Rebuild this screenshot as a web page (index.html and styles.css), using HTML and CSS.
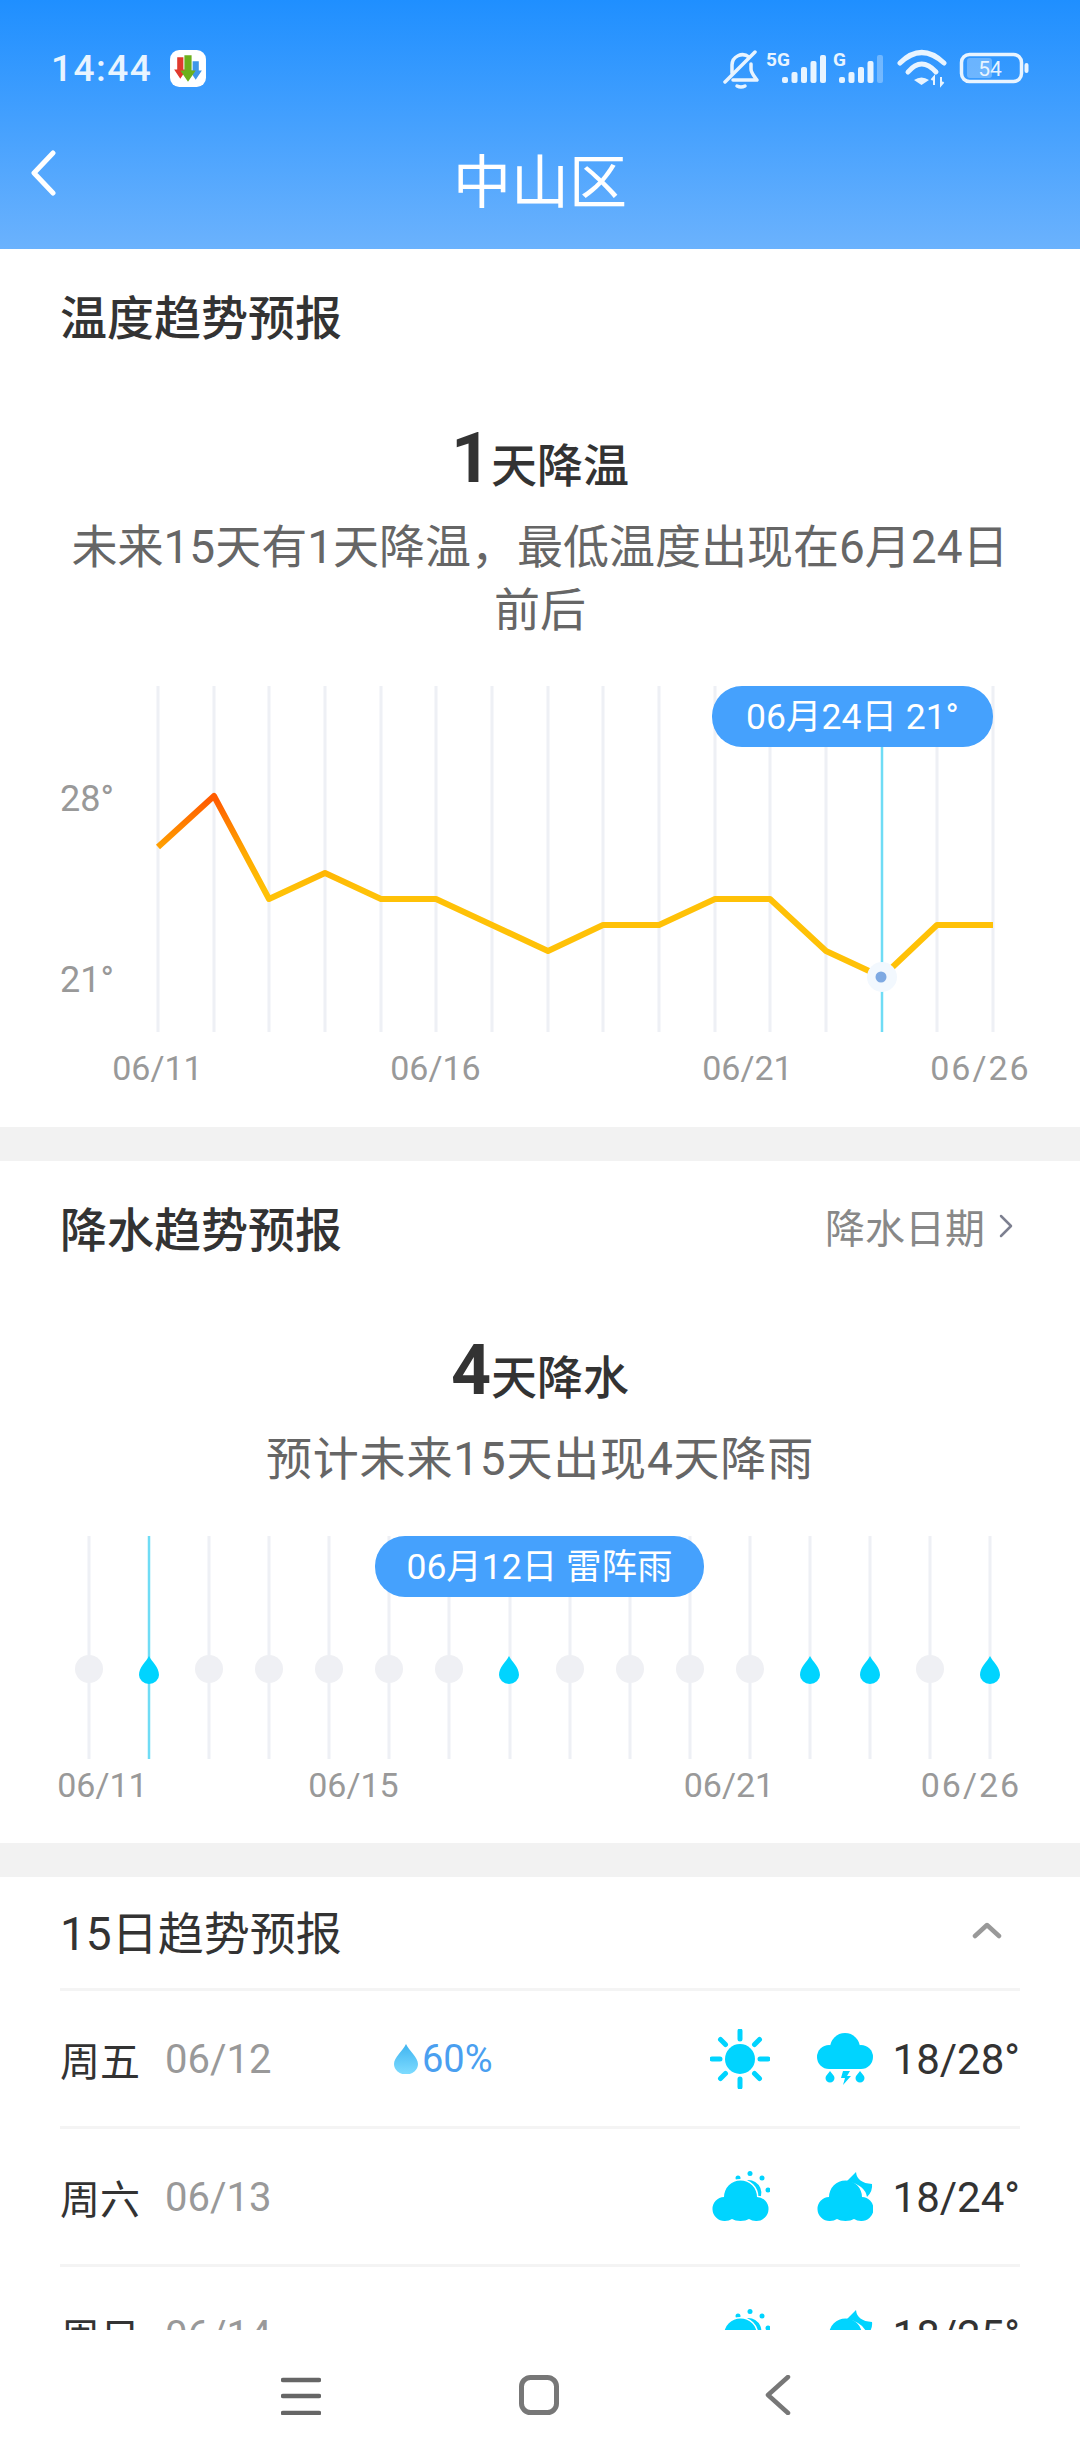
FILE: index.html
```html
<!DOCTYPE html>
<html lang="zh-CN">
<head>
    <meta charset="UTF-8">
    <meta name="viewport" content="width=device-width, initial-scale=1.0">
    <title>中山区</title>
    <link rel="stylesheet" href="styles.css">
</head>
<body>
    <svg class="defs" width="0" height="0">
        <defs>
            <path id="drop" d="M0-14C3-8 10-3 10 5a10 9 0 0 1-20 0C-10-3-3-8 0-14z"/>
            <path id="cloud" d="M12 50a12 12 0 0 1-1-24a16.5 16.5 0 0 1 33 0a12 12 0 0 1-1 24q-4 0-7-2q-3 2-8.5 2q-5.5 0-8.5-2q-3 2-7 2z"/>
            <linearGradient id="tempLine" gradientUnits="userSpaceOnUse" x1="0" y1="800" x2="0" y2="890">
                <stop offset="0" stop-color="#ff5c00"/>
                <stop offset="0.6" stop-color="#ffaa00"/>
                <stop offset="1" stop-color="#ffc107"/>
            </linearGradient>
            <linearGradient id="rainDrop" x1="0" y1="0" x2="0" y2="1">
                <stop offset="0" stop-color="#3fb4f0"/>
                <stop offset="1" stop-color="#7fdcff"/>
            </linearGradient>
        </defs>
    </svg>

    <header class="header">
        <div class="status">
            <div class="status-left">
                <span class="time">14:44</span>
                <svg class="app-icon" width="36" height="37" viewBox="0 0 35 36">
                    <rect width="35" height="36" rx="9" fill="#fff"/>
                    <path d="M7 7h6v12h3l-6 9-6-9h3z" fill="#e0392d"/>
                    <path d="M22 11h6v9h3l-6 9-6-9h3z" fill="#3f97e8"/>
                    <path d="M14 5h7v15h4l-7.5 11L10 20h4z" fill="#6cb01c"/>
                </svg>
            </div>
            <svg class="status-icons" width="310" height="48" viewBox="0 -8 310 48">
                <g fill="none" stroke="#e8f4ff" stroke-width="3.5" stroke-linecap="round" stroke-linejoin="round">
                    <path d="M9 23v-8a10.500 10.500 0 0 1 17-8"/>
                    <path d="M28 14v5c0 4 3 7 6 11H10"/>
                    <path d="M2 32L32 2"/>
                    <path d="M14 36q4 2 8 0"/>
                </g>
                <text class="net" x="43" y="16">5G</text>
                <g fill="#e8f4ff">
                    <rect x="59" y="27" width="6" height="6" rx="2"/>
                    <rect x="68.5" y="22" width="6" height="11" rx="2"/>
                    <rect x="78" y="17" width="6" height="16" rx="2"/>
                    <rect x="87.5" y="11" width="6" height="22" rx="2"/>
                    <rect x="97" y="5" width="6" height="28" rx="2"/>
                    <rect x="116" y="27" width="6" height="6" rx="2"/>
                    <rect x="125.5" y="22" width="6" height="11" rx="2"/>
                    <rect x="135" y="17" width="6" height="16" rx="2"/>
                    <rect x="144.5" y="11" width="6" height="22" rx="2"/>
                    <rect x="154" y="5" width="6" height="28" rx="2" opacity="0.35"/>
                </g>
                <text class="net" x="110" y="16">G</text>
                <g fill="none" stroke="#e8f4ff" stroke-width="5" stroke-linecap="round">
                    <path d="M177 13Q198.5-8 221 13"/>
                    <path d="M185 22Q198.5 6 213 22"/>
                </g>
                <path d="M191 30q7.5-5 15 0l-7.5 5z" fill="#e8f4ff"/>
                <path d="M211 35v-8l-2.5 3M218 27v8l2.5-3" fill="none" stroke="#e8f4ff" stroke-width="2"/>
                <rect x="238.5" y="4.5" width="60" height="27" rx="8" fill="none" stroke="#e8f4ff" stroke-width="3.5"/>
                <rect x="244" y="8" width="25" height="20" rx="3" fill="#fff" opacity="0.28"/>
                <rect x="301.5" y="13" width="4" height="10" rx="2" fill="#e8f4ff"/>
                <text class="batt" x="267" y="26" text-anchor="middle">54</text>
            </svg>
        </div>
        <div class="titlebar">
            <svg class="back" width="26" height="46" viewBox="0 0 26 46">
                <path d="M23 3L4 23l19 20" fill="none" stroke="#fff" stroke-width="5" stroke-linecap="round" stroke-linejoin="round"/>
            </svg>
            <h1>中山区</h1>
        </div>
    </header>

    <main class="content">
        <section class="card">
            <div class="card-head">
                <h2>温度趋势预报</h2>
            </div>
            <div class="summary"><b>1</b>天降温</div>
            <p class="desc">未来15天有1天降温，最低温度出现在6月24日前后</p>
            <svg class="chart" width="1080" height="441" viewBox="0 686 1080 441">
                <path class="grid" d="M158 686V1032M214 686V1032M269 686V1032M325 686V1032M381 686V1032M436 686V1032M492 686V1032M548 686V1032M603 686V1032M659 686V1032M715 686V1032M770 686V1032M826 686V1032M937 686V1032M993 686V1032"/>
                <path class="picked" d="M882 740V1032"/>
                <polyline class="temp" points="158,847 214,796 269,899 325,873 381,899 436,899 492,925 548,951 603,925 659,925 715,899 770,899 826,951 882,977 937,925 993,925"/>
                <circle cx="882" cy="977" r="15" fill="#f2f8fe"/>
                <circle cx="881" cy="977" r="5.5" fill="#7ea9e2"/>
                <text class="axis side" x="60" y="811">28°</text>
                <text class="axis side" x="60" y="992">21°</text>
                <text class="axis mid" x="157.5" y="1080">06/11</text>
                <text class="axis mid" x="435.5" y="1080">06/16</text>
                <text class="axis mid" x="747.5" y="1080">06/21</text>
                <text class="axis mid wide" x="980.5" y="1080">06/26</text>
                <rect class="pill" x="712" y="686" width="281" height="61" rx="30"/>
                <text class="pill-text" x="852.5" y="729">06月24日 21°</text>
            </svg>
        </section>

        <section class="card">
            <div class="card-head">
                <h2>降水趋势预报</h2>
                <span class="more">降水日期
                    <svg width="14" height="24" viewBox="0 0 14 24"><path d="M2 2l10 10-10 10" fill="none" stroke="#7d8090" stroke-width="2.5" stroke-linecap="round" stroke-linejoin="round"/></svg>
                </span>
            </div>
            <div class="summary"><b>4</b>天降水</div>
            <p class="desc rain-desc">预计未来15天出现4天降雨</p>
            <svg class="chart rain-chart" width="1080" height="307" viewBox="0 1536 1080 307">
                <path class="grid" d="M89 1536V1759M209 1536V1759M269 1536V1759M329 1536V1759M389 1536V1759M449 1536V1759M510 1536V1759M570 1536V1759M630 1536V1759M690 1536V1759M750 1536V1759M810 1536V1759M870 1536V1759M930 1536V1759M990 1536V1759"/>
                <path class="picked" d="M149 1536V1759"/>
                <g class="off">
                    <circle cx="89" cy="1669" r="14"/>
                    <circle cx="209" cy="1669" r="14"/>
                    <circle cx="269" cy="1669" r="14"/>
                    <circle cx="329" cy="1669" r="14"/>
                    <circle cx="389" cy="1669" r="14"/>
                    <circle cx="449" cy="1669" r="14"/>
                    <circle cx="570" cy="1669" r="14"/>
                    <circle cx="630" cy="1669" r="14"/>
                    <circle cx="690" cy="1669" r="14"/>
                    <circle cx="750" cy="1669" r="14"/>
                    <circle cx="930" cy="1669" r="14"/>
                </g>
                <g class="on">
                    <use href="#drop" x="149" y="1670"/>
                    <use href="#drop" x="509" y="1670"/>
                    <use href="#drop" x="810" y="1670"/>
                    <use href="#drop" x="870" y="1670"/>
                    <use href="#drop" x="990" y="1670"/>
                </g>
                <text class="axis mid" x="102.5" y="1797">06/11</text>
                <text class="axis mid" x="353.5" y="1797">06/15</text>
                <text class="axis mid" x="729" y="1797">06/21</text>
                <text class="axis mid wide" x="971" y="1797">06/26</text>
                <rect class="pill" x="375" y="1536" width="329" height="61" rx="30"/>
                <text class="pill-text" x="539.5" y="1579">06月12日 雷阵雨</text>
            </svg>
        </section>

        <section class="card forecast">
            <div class="forecast-head">
                <h3>15日趋势预报</h3>
                <svg width="30" height="18" viewBox="0 0 30 18"><path d="M3 15L15 4l12 11" fill="none" stroke="#999" stroke-width="4.5" stroke-linecap="round" stroke-linejoin="round"/></svg>
            </div>

            <div class="row">
                <span class="week">周五</span>
                <span class="date">06/12</span>
                <span class="chance">
                    <svg width="24" height="30" viewBox="-12 -15 24 30"><path d="M0-15C3-8 12-2 12 5a12 10.5 0 0 1-24 0C-12-2-3-8 0-15z" fill="url(#rainDrop)"/></svg>60%
                </span>
                <svg class="sky" width="60" height="60" viewBox="0 0 60 60">
                    <circle cx="30" cy="30" r="15"/>
                    <path class="rays" d="M30 2v8M30 50v8M2 30h8M50 30h8M10.5 10.5l5 5M44.5 44.5l5 5M10.5 49.5l5-5M44.5 15.5l5-5"/>
                </svg>
                <svg class="sky" width="56" height="52" viewBox="0 0 56 52">
                    <circle cx="28" cy="15" r="15"/>
                    <circle cx="12" cy="24" r="12"/>
                    <circle cx="44" cy="24" r="12"/>
                    <rect x="12" y="20" width="32" height="16"/>
                    <path d="M13 38c2 3 4.5 4.5 4.5 7a4.5 4.5 0 0 1-9 0c0-2.5 2.5-4 4.5-7zM43 38c2 3 4.5 4.5 4.5 7a4.5 4.5 0 0 1-9 0c0-2.5 2.5-4 4.5-7zM26 38h7l-3 5h4l-8 9 2-7h-4z"/>
                </svg>
                <span class="temp-range">18/28°</span>
            </div>

            <div class="row">
                <span class="week">周六</span>
                <span class="date">06/13</span>
                <span class="chance"></span>
                <svg class="sky" width="60" height="52" viewBox="-3 0 60 52">
                    <circle cx="25" cy="7" r="2.5"/><circle cx="37" cy="2.5" r="2.5"/><circle cx="49" cy="7" r="2.5"/><circle cx="55" cy="19" r="2.5"/>
                    <path d="M27 12a13 13 0 0 1 21 13l-3 2q-4-11-18-15z"/>
                    <use href="#cloud" class="cloud-cut"/>
                </svg>
                <svg class="sky" width="56" height="52" viewBox="-1 0 56 52">
                    <path d="M29 10L38 1Q39 12 54 13Q55 20 49 26Q47 14 29 10z"/>
                    <use href="#cloud"/>
                </svg>
                <span class="temp-range">18/24°</span>
            </div>

            <div class="row">
                <span class="week">周日</span>
                <span class="date">06/14</span>
                <span class="chance"></span>
                <svg class="sky" width="60" height="52" viewBox="-3 0 60 52">
                    <circle cx="25" cy="7" r="2.5"/><circle cx="37" cy="2.5" r="2.5"/><circle cx="49" cy="7" r="2.5"/><circle cx="55" cy="19" r="2.5"/>
                    <path d="M27 12a13 13 0 0 1 21 13l-3 2q-4-11-18-15z"/>
                    <use href="#cloud" class="cloud-cut"/>
                </svg>
                <svg class="sky" width="56" height="52" viewBox="-1 0 56 52">
                    <path d="M29 10L38 1Q39 12 54 13Q55 20 49 26Q47 14 29 10z"/>
                    <use href="#cloud"/>
                </svg>
                <span class="temp-range">18/25°</span>
            </div>
        </section>
    </main>

    <footer class="navbar">
        <svg width="40" height="40" viewBox="0 0 40 40"><path d="M2 5h36M2 21h36M2 38h36" fill="none" stroke="#666" stroke-width="4.5" stroke-linecap="round"/></svg>
        <svg width="40" height="40" viewBox="0 0 40 40"><rect x="2.5" y="2.5" width="35" height="35" rx="9" fill="none" stroke="#777" stroke-width="5"/></svg>
        <svg width="26" height="40" viewBox="0 0 26 40"><path d="M23 2L3 20l20 18" fill="none" stroke="#777" stroke-width="4.5" stroke-linecap="round" stroke-linejoin="round"/></svg>
    </footer>
</body>
</html>
```

FILE: styles.css
```css
* {
    box-sizing: border-box;
}
html, body {
    margin: 0;
    padding: 0;
}
body {
    width: 1080px;
    height: 2460px;
    display: flex;
    flex-direction: column;
    overflow: hidden;
    background: #fff;
    color: #333;
    font-family: Roboto, "Noto Sans CJK SC", sans-serif;
}
.defs {
    position: absolute;
}

/* header */
.header {
    height: 249px;
    flex: none;
    padding-top: 48px;
    background: linear-gradient(#1f8fff, #6bb2fd);
    color: #fff;
}
.status {
    display: flex;
    justify-content: space-between;
    align-items: center;
    height: 40px;
    padding-left: 51px;
    padding-right: 47px;
}
.status-icons {
    margin-bottom: 4px;
}
.status-left {
    display: flex;
    align-items: center;
    gap: 18px;
}
.time {
    font-size: 37px;
    font-weight: 500;
    color: #e8f4ff;
    letter-spacing: 1.5px;
}
.net {
    font-size: 19px;
    font-weight: 700;
    fill: #e8f4ff;
}
.batt {
    font-size: 21px;
    fill: #e8f4ff;
}
.titlebar {
    display: flex;
    position: relative;
    justify-content: center;
    padding-top: 60px;
}
.titlebar h1 {
    margin: 0;
    font-size: 58px;
    line-height: 70px;
    font-weight: 400;
}
.back {
    position: absolute;
    left: 30px;
    top: 62px;
}

/* sections */
.content {
    flex: 1;
    min-height: 0;
    overflow: hidden;
    background: #f2f2f2;
}
.card {
    background: #fff;
    margin-bottom: 34px;
    padding-top: 35px;
}
.card-head {
    display: flex;
    justify-content: space-between;
    align-items: center;
    height: 60px;
    padding: 0 67px 0 60px;
}
h2 {
    margin: 0;
    font-size: 47px;
    font-weight: 500;
}
.more {
    display: flex;
    align-items: center;
    gap: 14px;
    font-size: 40px;
    color: #888;
}
.summary {
    height: 80px;
    margin-top: 74px;
    text-align: center;
    font-size: 46px;
    line-height: 80px;
    font-weight: 500;
}
.summary b {
    font-size: 70px;
    font-weight: 700;
}
.desc {
    margin: 18px 60px 0;
    text-align: center;
    font-size: 46px;
    line-height: 63px;
    color: #666;
}
.rain-desc {
    letter-spacing: 0.8px;
}
.chart {
    display: block;
    margin-top: 44px;
}
.rain-chart {
    margin-top: 45px;
}
.grid {
    fill: none;
    stroke: #eef0f5;
    stroke-width: 3;
}
.picked {
    fill: none;
    stroke: #6fdcf5;
    stroke-width: 2.5;
}
.temp {
    fill: none;
    stroke: url(#tempLine);
    stroke-width: 6;
    stroke-linejoin: round;
}
.axis {
    font-size: 34px;
    fill: #999;
}
.side {
    font-size: 36px;
}
.mid {
    text-anchor: middle;
}
.wide {
    letter-spacing: 2px;
}
.pill {
    fill: #45a1fd;
}
.pill-text {
    font-size: 35.5px;
    fill: #fff;
    text-anchor: middle;
}
.off {
    fill: #eff0f4;
}
.on {
    fill: #00d4ff;
}

/* 15 day list */
.forecast {
    margin-bottom: 0;
    padding: 0 60px;
}
.forecast-head {
    display: flex;
    justify-content: space-between;
    align-items: center;
    height: 111px;
    padding-right: 18px;
    padding-bottom: 5px;
}
h3 {
    margin: 0;
    font-size: 46px;
    font-weight: 400;
}
.row {
    display: flex;
    align-items: center;
    height: 138px;
    border-top: 3px solid #f4f4f4;
}
.week {
    width: 105px;
    font-size: 40px;
}
.date {
    width: 229px;
    margin-top: 2px;
    font-size: 40px;
    color: #999;
}
.chance {
    display: flex;
    align-items: center;
    gap: 4px;
    width: 316px;
    font-size: 38px;
    color: #4a9ff0;
}
.sky {
    fill: #00d4ff;
    flex: none;
}
.sky + .sky {
    margin-left: 47px;
}
.rays {
    fill: none;
    stroke: #00d4ff;
    stroke-width: 5;
    stroke-linecap: round;
}
.cloud-cut {
    stroke: #fff;
    stroke-width: 3;
    paint-order: stroke;
}
.temp-range {
    width: 147px;
    margin-top: 2px;
    text-align: right;
    font-size: 42px;
}

/* bottom nav */
.navbar {
    height: 130px;
    flex: none;
    display: flex;
    align-items: flex-start;
    background: #fff;
    padding: 45px 0 0 281px;
    gap: 198px;
}
.navbar svg:last-child {
    margin-left: 8px;
}
```
